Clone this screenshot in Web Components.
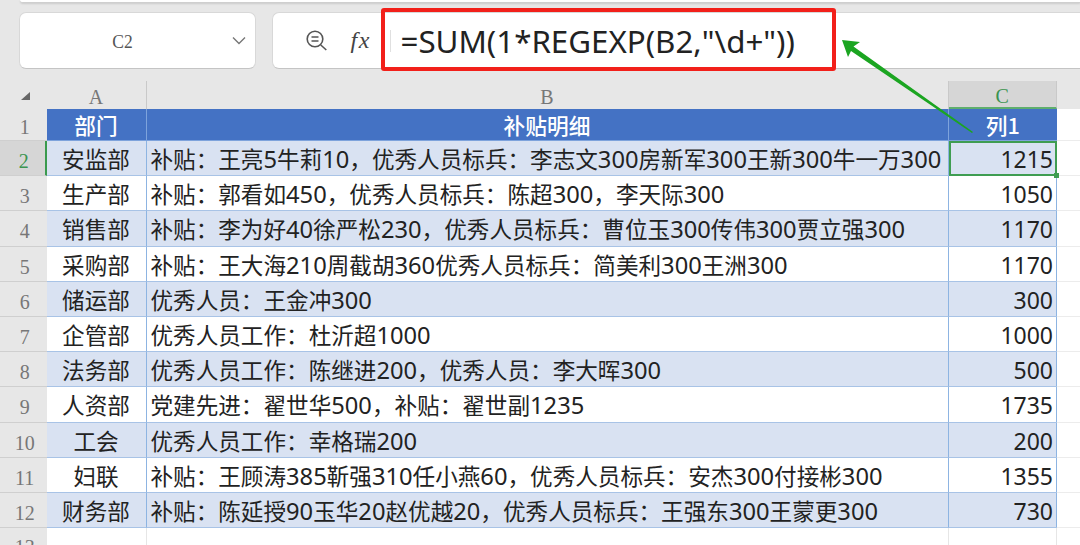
<!DOCTYPE html>
<html lang="zh"><head><meta charset="utf-8"><style>
html,body{margin:0;padding:0;background:#e7e7e7;width:1080px;height:545px;overflow:hidden}
</style></head><body>
<x-app></x-app>
<script>
const CJK='"Noto Sans CJK SC","Noto Sans",sans-serif';
class XFormulaBar extends HTMLElement{constructor(){super();this.attachShadow({mode:'open'}).innerHTML=`<style>
:host{display:flex;height:57px;margin:0 0 0 18.5px;gap:16px;position:relative}
.box{background:#fff;border:1px solid #d8d8d8;border-bottom:1.5px solid #c4c4c4;border-radius:7px;box-sizing:border-box;height:57px}
.name{width:237px;display:flex;align-items:center;position:relative}
.name span{flex:1;text-align:center;font:19px "Liberation Serif","DejaVu Serif",serif;color:#555;transform:scaleX(.92);margin-left:-30px;padding-top:2px}
.name svg{position:absolute;right:8px;top:22px}
.fx{flex:1;border-right:0;border-radius:7px 0 0 7px;display:flex;align-items:center;padding-left:33px;gap:0}
.f{font:italic 24px "Liberation Serif",serif;color:#444;margin-left:24px;letter-spacing:1.5px;width:39px;flex:none}
.sep{width:1px;height:22px;background:#e0e0e0;flex:none}
.formula{font:31.3px "Noto Sans",sans-serif;color:#222;margin-left:10px;white-space:nowrap;flex:none}
</style>
<div class="box name"><span>C2</span><svg width="16" height="12" viewBox="0 0 16 12"><path d="M2 2.5l6 6 6-6" fill="none" stroke="#777" stroke-width="1.4"/></svg></div>
<div class="box fx"><svg width="21" height="21" viewBox="0 0 21 21" fill="none" stroke="#555" stroke-width="1.6" style="flex:none"><circle cx="9" cy="9" r="7.8"/><path d="M5.5 7h7M5.5 11h7M14.8 15l5.5 5"/></svg><span class="f">fx</span><span class="sep"></span><span class="formula">=SUM(1*REGEXP(B2,"\\d+"))</span></div>`}}
customElements.define('x-formula-bar',XFormulaBar);

class XSheet extends HTMLElement{constructor(){super();
const rows=[['安监部','补贴：王亮5牛莉10，优秀人员标兵：李志文300房新军300王新300牛一万300','1215'],['生产部','补贴：郭看如450，优秀人员标兵：陈超300，李天际300','1050'],['销售部','补贴：李为好40徐严松230，优秀人员标兵：曹位玉300传伟300贾立强300','1170'],['采购部','补贴：王大海210周截胡360优秀人员标兵：简美利300王洲300','1170'],['储运部','优秀人员：王金冲300','300'],['企管部','优秀人员工作：杜沂超1000','1000'],['法务部','优秀人员工作：陈继进200，优秀人员：李大晖300','500'],['人资部','党建先进：翟世华500，补贴：翟世副1235','1735'],['工会','优秀人员工作：幸格瑞200','200'],['妇联','补贴：王顾涛385靳强310任小燕60，优秀人员标兵：安杰300付接彬300','1355'],['财务部','补贴：陈延授90玉华20赵优越20，优秀人员标兵：王强东300王蒙更300','730']];
const d=s=>s.replace(/\d+/g,m=>`<span class="d">${m}</span>`);
let h=`<div class="corner"><svg width="11" height="10" viewBox="0 0 11 10"><path d="M10 1v8H1z" fill="#666"/></svg></div><div class="ch">A</div><div class="ch">B</div><div class="ch sel">C</div><div class="fill ch0"></div>
<div class="rh">1</div><div class="hd">部门</div><div class="hd">补贴明细</div><div class="hd last">列1</div><div class="fill"></div>`;
rows.forEach((r,i)=>{const b=i%2==0?'band':'plain';const n=i+2;
h+=`<div class="rh ${i==0?'rsel':''}">${n}</div><div class="c a ${b}">${r[0]}</div><div class="c b ${b}">${d(r[1])}</div><div class="c n ${b} ${i==0?'active':''}">${d(r[2])}</div><div class="fill"></div>`});
h+=`<div class="rh e">13</div><div class="c e1"></div><div class="c e1"></div><div class="c e1"></div><div class="fill"></div>`;
this.attachShadow({mode:'open'}).innerHTML=`<style>
:host{display:grid;grid-template-columns:46.5px 100px 802px 108.5px 1fr;grid-template-rows:28px 32.5px repeat(11,35.2px) 20px;margin-top:11.5px;font:22.6px ${CJK};color:#222}
.d{font:23.7px "Noto Sans",sans-serif}
.n .d{font-size:23px}
.corner{display:flex;align-items:center;justify-content:center;padding-top:2px;padding-left:4px;box-sizing:border-box}
.ch{font:20px "Liberation Serif",serif;color:#777;display:flex;align-items:center;justify-content:center;border-right:1px solid #c9c9c9;box-sizing:border-box;padding-top:5px}
.sel{background:#d6d6d6;color:#3b9450;border-bottom:2px solid #5fae6e}
.rh{font:20px "Liberation Serif",serif;color:#777;display:flex;align-items:center;justify-content:center;border-bottom:1px solid #cfcfcf;box-sizing:border-box;padding-left:3px;padding-top:7px}
.rsel{background:#d6d6d6;color:#3b9450;border-right:2px solid #3a9a4e}
.e{align-items:flex-start;background:#e7e7e7;padding-top:8px}
.hd{background:#4472c4;color:#fff;font-weight:500;font-size:21.7px;text-align:center;line-height:31px;border-right:1px solid #7ea3dc;border-bottom:1px solid #7ea3dc;box-sizing:border-box}
.hd.last{border-right:0}
.c{box-sizing:border-box;white-space:nowrap;line-height:35px;border-bottom:1px solid #a8c3e6;border-right:1px solid #8db4e2;background:#fff;overflow:hidden}
.band{background:#d9e2f2}
.a{text-align:center}.b{padding-left:4px}.n{text-align:right;padding-right:4px;border-right:0;box-shadow:inset -1px 0 0 #8db4e2}
.active{outline:2px solid #3f9d52;outline-offset:-2px;overflow:visible;position:relative;box-shadow:none}
.active::after{content:"";position:absolute;right:-2px;bottom:-3px;width:5px;height:5px;background:#3f9d52}
.e1{border-bottom:0;border-right:1px solid #e6e6e6}
.fill{background:#fff;border-bottom:1px solid #ececec}
.ch0{background:transparent;border:0}
</style>${h}`}}
customElements.define('x-sheet',XSheet);

class XApp extends HTMLElement{constructor(){super();this.attachShadow({mode:'open'}).innerHTML=`<style>
:host{display:block;width:1080px;height:545px;position:relative;overflow:hidden;background:#e7e7e7}
.top{height:2px;margin:0 0 9px 20px;background:#fff;border-bottom:1px solid #cfcfcf;border-radius:0 0 0 5px;box-shadow:0 1px 2px rgba(0,0,0,.12)}
.red{position:absolute;left:381px;top:8px;width:455px;height:63px;box-sizing:border-box;border:4px solid #f2201a;border-radius:3px}
.arrow{position:absolute;left:0;top:0;pointer-events:none}
</style><div class="top"></div><x-formula-bar></x-formula-bar><x-sheet></x-sheet><div class="red"></div>
<svg class="arrow" width="1080" height="545"><path d="M842 40L860 42 853.5 46.5 973 132 972 133 851 51 848 57z" fill="#1ba521"/></svg>`}}
customElements.define('x-app',XApp);
</script></body></html>
